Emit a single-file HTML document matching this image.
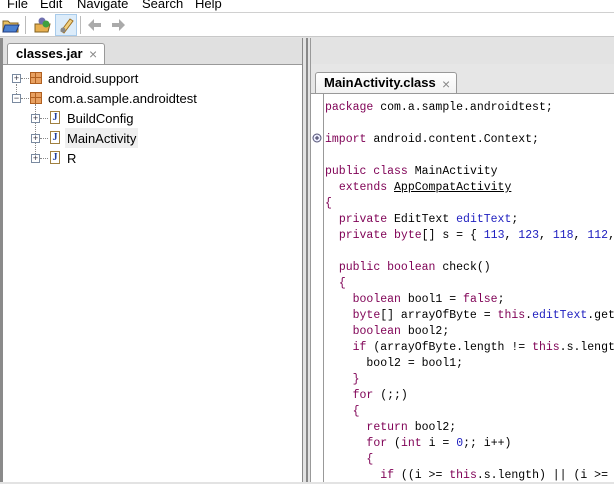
<!DOCTYPE html>
<html><head><meta charset="utf-8"><style>
*{margin:0;padding:0;box-sizing:border-box}
body{width:614px;height:482px;overflow:hidden;background:#e3e3e3;font-family:"Liberation Sans","Noto Sans CJK SC",sans-serif;position:relative}
.abs{position:absolute}
.menu{left:0;top:0;width:614px;height:13px;background:#fff;font-size:13px;line-height:10px;overflow:hidden;border-bottom:1px solid #d0d0d0}
.menu span{position:absolute;top:-1px}
.tb{left:0;top:13px;width:614px;height:24px;background:#fff;border-bottom:1px solid #c8c8c8}
.tab{font-weight:bold;font-size:13px;background:#fff;border:1px solid #999;border-bottom:none;border-radius:3px 3px 0 0;height:21px;line-height:20px;padding-left:8px}
.x{color:#888;font-weight:normal;font-size:14px;position:absolute}
.tree{font-size:13px;color:#000}
.tree div{position:absolute;height:20px;line-height:21px}
.pm{position:absolute;width:9px;height:9px;border:1px solid #7a8aa0;background:#fff;font-size:9px;line-height:7px;text-align:center;color:#334}
.pkg{position:absolute;width:12px;height:12px;background:#e8a060;border:1px solid #b06020}
.pkg:before{content:"";position:absolute;left:4px;top:0;width:1px;height:10px;background:#b06020}
.pkg:after{content:"";position:absolute;left:0;top:4px;width:10px;height:1px;background:#b06020}
.jf{position:absolute;width:10px;height:13px;border:1px solid #a08040;background:#fff;font-size:10px;line-height:11px;font-weight:bold;color:#2040a0;text-align:center;font-family:"Liberation Serif",serif}
.code{font-family:"Liberation Mono",monospace;font-size:11.5px;line-height:16px;white-space:pre;color:#000}
.k{color:#7f0055}.b{color:#2020c0}.u{text-decoration:underline}
.dot{position:absolute;border-top:1px dotted #888}
.vd{position:absolute;border-left:1px dotted #888}
</style></head><body>
<div class="abs menu"><span style="left:7px">File</span><span style="left:40px">Edit</span><span style="left:77px">Navigate</span><span style="left:142px">Search</span><span style="left:195px">Help</span></div>
<div class="abs tb">
 <svg class="abs" style="left:2px;top:4px" width="18" height="16"><path d="M1 4h5l2 2h8v9H1z" fill="#e8c060" stroke="#806020"/><path d="M3 8h14l-3 7H1z" fill="#4a80d0" stroke="#203c80"/></svg>
 <div class="abs" style="left:25px;top:3px;width:1px;height:18px;background:#bbb"></div>
 <svg class="abs" style="left:34px;top:3px" width="18" height="17"><path d="M1 8h15l-2 8H1z" fill="#e8b050" stroke="#806020"/><circle cx="8" cy="5" r="3.5" fill="#7070b0"/><circle cx="12" cy="8" r="3.5" fill="#40a040"/></svg>
 <div class="abs" style="left:55px;top:1px;width:22px;height:22px;background:#dcecfa;border:1px solid #a8cbeb"></div>
 <svg class="abs" style="left:58px;top:3px" width="18" height="18"><path d="M3 15l9-12 3 2-9 12z" fill="#f0d080" stroke="#a07020"/><circle cx="5" cy="14" r="2.5" fill="#888"/></svg>
 <div class="abs" style="left:80px;top:3px;width:1px;height:18px;background:#bbb"></div>
 <svg class="abs" style="left:87px;top:5px" width="40" height="14"><path d="M1 7l6-6v4h7v4H7v4z" fill="#aaa"/><path d="M38 7l-6-6v4h-7v4h7v4z" fill="#aaa"/></svg>
</div>
<div class="abs" style="left:0;top:38px;width:302px;height:444px;background:#e0e0e0;border-left:3px solid #8a8a8a"></div>
<div class="abs tab" style="left:7px;top:43px;width:98px">classes.jar<span class="x" style="left:81px;top:0">×</span></div>
<div class="abs" style="left:3px;top:64px;width:299px;height:418px;background:#fff;border-top:1px solid #999"></div>
<div class="abs tree">
 <div class="vd" style="left:16px;top:84px;height:16px"></div>
 <div class="vd" style="left:35px;top:104px;height:56px"></div>
 <div class="dot" style="left:21px;top:78px;width:8px"></div>
 <div class="dot" style="left:21px;top:98px;width:8px"></div>
 <div class="dot" style="left:40px;top:118px;width:8px"></div>
 <div class="dot" style="left:40px;top:138px;width:8px"></div>
 <div class="dot" style="left:40px;top:158px;width:8px"></div>
 <span class="pm" style="left:12px;top:74px">+</span><span class="pkg" style="left:30px;top:72px"></span><div style="left:48px;top:68px">android.support</div>
 <span class="pm" style="left:12px;top:94px">−</span><span class="pkg" style="left:30px;top:92px"></span><div style="left:48px;top:88px">com.a.sample.androidtest</div>
 <span class="pm" style="left:31px;top:114px">+</span><span class="jf" style="left:50px;top:111px">J</span><div style="left:67px;top:108px">BuildConfig</div>
 <div style="left:65px;top:128px;width:73px;background:#efefef"></div>
 <span class="pm" style="left:31px;top:134px">+</span><span class="jf" style="left:50px;top:131px">J</span><div style="left:67px;top:128px">MainActivity</div>
 <span class="pm" style="left:31px;top:154px">+</span><span class="jf" style="left:50px;top:151px">J</span><div style="left:67px;top:148px">R</div>
</div>
<div class="abs" style="left:302px;top:38px;width:1px;height:444px;background:#888"></div>
<div class="abs" style="left:306px;top:38px;width:2px;height:444px;background:#888"></div>
<div class="abs" style="left:310px;top:38px;width:1px;height:444px;background:#999"></div>
<div class="abs" style="left:311px;top:64px;width:303px;height:418px;background:#e6e6e6"></div>
<div class="abs tab" style="left:315px;top:72px;width:142px;background:linear-gradient(#fff,#f2f2f2)">MainActivity.class<span class="x" style="left:126px;top:1px">×</span></div>
<div class="abs" style="left:311px;top:93px;width:303px;height:389px;background:#fff;border-top:1px solid #999"></div>
<div class="abs" style="left:323px;top:94px;width:1px;height:388px;background:#999"></div>
<svg class="abs" style="left:312px;top:133px" width="10" height="10"><circle cx="5" cy="5" r="4" fill="#eef" stroke="#557"/><path d="M3 5h4M5 3v4" stroke="#335"/></svg>
<div class="abs code" style="left:325px;top:100px"><span class="k">package</span> com.a.sample.androidtest;

<span class="k">import</span> android.content.Context;

<span class="k">public class</span> MainActivity
  <span class="k">extends</span> <span class="u">AppCompatActivity</span>
<span class="k">{</span>
  <span class="k">private</span> EditText <span class="b">editText</span>;
  <span class="k">private byte</span>[] s = { <span class="b">113</span>, <span class="b">123</span>, <span class="b">118</span>, <span class="b">112</span>, 

  <span class="k">public boolean</span> check()
  <span class="k">{</span>
    <span class="k">boolean</span> bool1 = <span class="k">false</span>;
    <span class="k">byte</span>[] arrayOfByte = <span class="k">this</span>.<span class="b">editText</span>.getText
    <span class="k">boolean</span> bool2;
    <span class="k">if</span> (arrayOfByte.length != <span class="k">this</span>.s.length)
      bool2 = bool1;
    <span class="k">}</span>
    <span class="k">for</span> (;;)
    <span class="k">{</span>
      <span class="k">return</span> bool2;
      <span class="k">for</span> (<span class="k">int</span> i = <span class="b">0</span>;; i++)
      <span class="k">{</span>
        <span class="k">if</span> ((i &gt;= <span class="k">this</span>.s.length) || (i &gt;= </div>
</body></html>
